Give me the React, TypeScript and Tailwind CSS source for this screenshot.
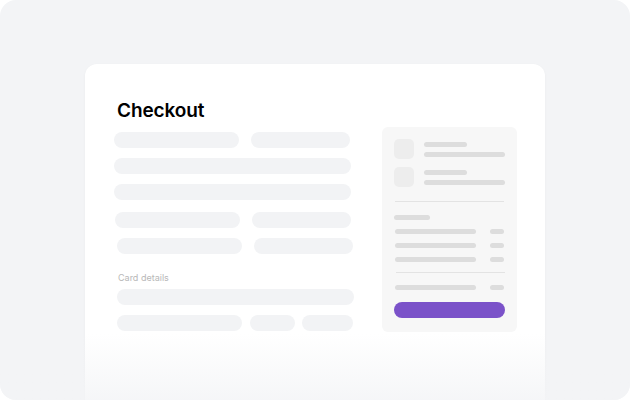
import React from "react";

function Bar({ className }: { className: string }) {
  return <div className={"h-4 rounded-full bg-[#f2f3f5] " + className} />;
}

function SummaryItem() {
  return (
    <div className="flex items-center gap-[10px]">
      <div className="w-5 h-5 rounded-[5px] bg-[#ededed]" />
      <div className="flex flex-col gap-[5px]">
        <div className="h-[5px] w-[43px] rounded-full bg-[#dddddd]" />
        <div className="h-[5px] w-[81px] rounded-full bg-[#dddddd]" />
      </div>
    </div>
  );
}

function SummaryRow({ className = "" }: { className?: string }) {
  return (
    <div className={"flex justify-between pl-[1px] pr-[1px] " + className}>
      <div className="h-[5px] w-[81px] rounded-full bg-[#dddddd]" />
      <div className="h-[5px] w-[14px] rounded-full bg-[#dddddd]" />
    </div>
  );
}

export default function App() {
  return (
    <div className="w-[630px] h-[400px] bg-white">
      <div
        className="relative w-[630px] h-[400px] bg-[#f3f4f6] rounded-2xl overflow-hidden pt-[64px] pl-[85px]"
        style={{ fontFamily: "Inter, 'Liberation Sans', sans-serif" }}
      >
        <div className="w-[460px] h-[360px] bg-white rounded-xl shadow-[0_1px_3px_rgba(0,0,0,0.04)] pt-[35px] pl-[29px]">
          <h1 className="ml-[3px] text-[19px] leading-[23px] font-semibold text-black tracking-[-0.1px]">
            Checkout
          </h1>
          <div className="flex mt-[5px]">
            <div className="w-[240px] pt-[5px]">
              <div className="flex gap-3">
                <Bar className="w-[125px]" />
                <Bar className="w-[99px]" />
              </div>
              <Bar className="w-[237px] mt-[10px]" />
              <Bar className="w-[237px] mt-[10px]" />
              <div className="flex gap-3 mt-3 ml-[1px]">
                <Bar className="w-[125px]" />
                <Bar className="w-[99px]" />
              </div>
              <div className="flex gap-3 mt-[10px] ml-[3px]">
                <Bar className="w-[125px]" />
                <Bar className="w-[99px]" />
              </div>
              <div className="ml-[4px] mt-[18px] text-[9px] leading-[12px] text-[#b8b8b8]">
                Card details
              </div>
              <Bar className="w-[237px] mt-[5px] ml-[3px]" />
              <div className="flex gap-[8px] mt-[10px] ml-[3px]">
                <Bar className="w-[125px]" />
                <Bar className="w-[45px]" />
                <Bar className="w-[51px] ml-[-1px]" />
              </div>
            </div>
            <div className="ml-[28px] w-[135px] rounded-md bg-[#f7f7f7] pt-3 pb-[14px] px-3">
              <div className="flex flex-col gap-2">
                <SummaryItem />
                <SummaryItem />
              </div>
              <div className="mt-[14px] ml-[1px] mr-[1px] h-px bg-[#e3e3e3]" />
              <div className="mt-[13px] h-[5px] w-9 rounded-full bg-[#dddddd]" />
              <SummaryRow className="mt-[9px]" />
              <SummaryRow className="mt-[9px]" />
              <SummaryRow className="mt-[9px]" />
              <div className="mt-[10px] ml-[2px] h-px bg-[#e3e3e3]" />
              <SummaryRow className="mt-[12px]" />
              <div className="mt-3 h-4 rounded-full bg-[#7b52c9]" />
            </div>
          </div>
        </div>
        <div className="absolute left-0 right-0 bottom-0 h-[66px] bg-gradient-to-b from-white/0 to-[#f3f4f6]/80" />
      </div>
    </div>
  );
}
